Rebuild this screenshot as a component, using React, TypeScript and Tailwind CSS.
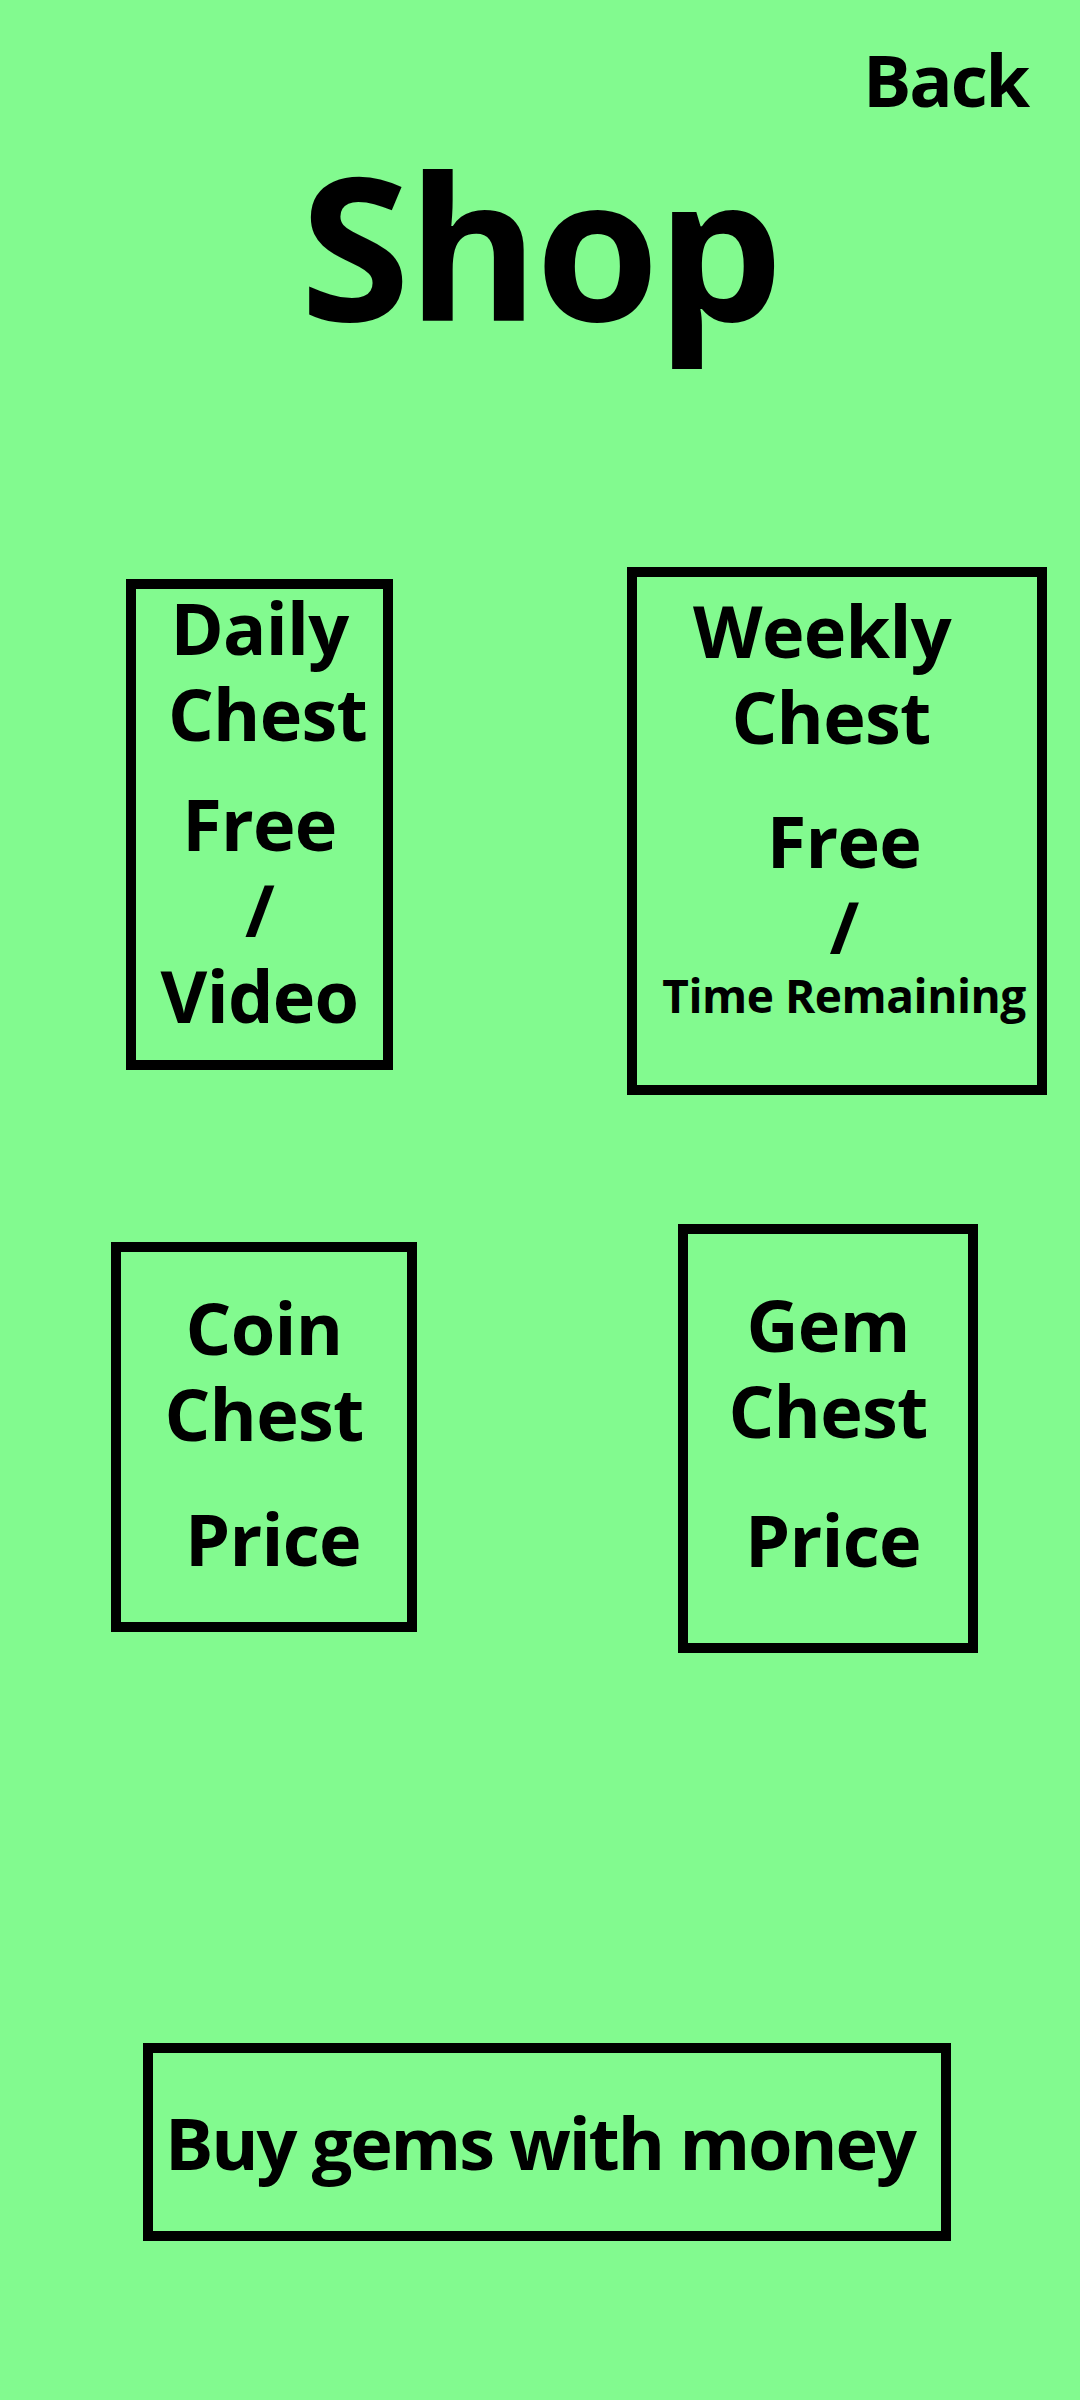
import React from "react";

const font = { fontFamily: '"Open Sans", "Noto Sans", sans-serif' };

function Box({ className, children }: { className: string; children: React.ReactNode }) {
  return (
    <div className={`shrink-0 border-[10px] border-black flex flex-col items-center text-center ${className}`}>
      {children}
    </div>
  );
}

export default function App() {
  return (
    <div
      className="min-h-screen w-[1080px] bg-[#82fa8f] text-black font-bold flex flex-col tracking-[-0.045em]"
      style={font}
    >
      <div className="flex justify-end pt-[36px] pr-[52px]">
        <button className="text-[72px] leading-[86px] tracking-[-0.03em]">Back</button>
      </div>

      <h1 className="mt-[22px] text-center text-[200px] leading-[200px] tracking-[-0.015em]">Shop</h1>

      {/* free chests */}
      <div className="mt-[223px] flex items-start">
        <Box className="ml-[126px] mt-[12px] w-[267px] h-[491px]">
          <div className="-mt-[5px] text-[72px] leading-[86px]">
            <div>Daily</div>
            <div className="ml-[16px]">Chest</div>
          </div>
          <div className="mt-[24px] text-[72px] leading-[86px]">
            <div>Free</div>
            <div>/</div>
            <div>Video</div>
          </div>
        </Box>

        <Box className="ml-[234px] w-[420px] h-[528px]">
          <div className="mt-[10px] text-[72px] leading-[86px]">
            <div className="mr-[30px]">Weekly</div>
            <div className="mr-[12px]">Chest</div>
          </div>
          <div className="mt-[38px] ml-[14px] flex flex-col items-center">
            <div className="text-[72px] leading-[86px]">Free</div>
            <div className="text-[72px] leading-[86px]">/</div>
            <div className="text-[46px] leading-[52px] whitespace-nowrap tracking-[-0.01em]">Time Remaining</div>
          </div>
        </Box>
      </div>

      {/* paid chests */}
      <div className="mt-[129px] flex items-start">
        <Box className="ml-[111px] mt-[18px] w-[306px] h-[390px]">
          <div className="mt-[32px] text-[72px] leading-[86px]">
            <div>Coin</div>
            <div>Chest</div>
          </div>
          <div className="mt-[39px] ml-[18px] text-[72px] leading-[86px]">Price</div>
        </Box>

        <Box className="ml-[261px] w-[300px] h-[429px]">
          <div className="mt-[47px] text-[72px] leading-[86px]">
            <div>Gem</div>
            <div>Chest</div>
          </div>
          <div className="mt-[43px] ml-[10px] text-[72px] leading-[86px]">Price</div>
        </Box>
      </div>

      <button className="mt-[390px] ml-[143px] w-[808px] h-[198px] border-[10px] border-black flex items-center pl-[12px] text-[72px] leading-[86px] tracking-[-0.03em] whitespace-nowrap">
        Buy gems with money
      </button>
    </div>
  );
}
